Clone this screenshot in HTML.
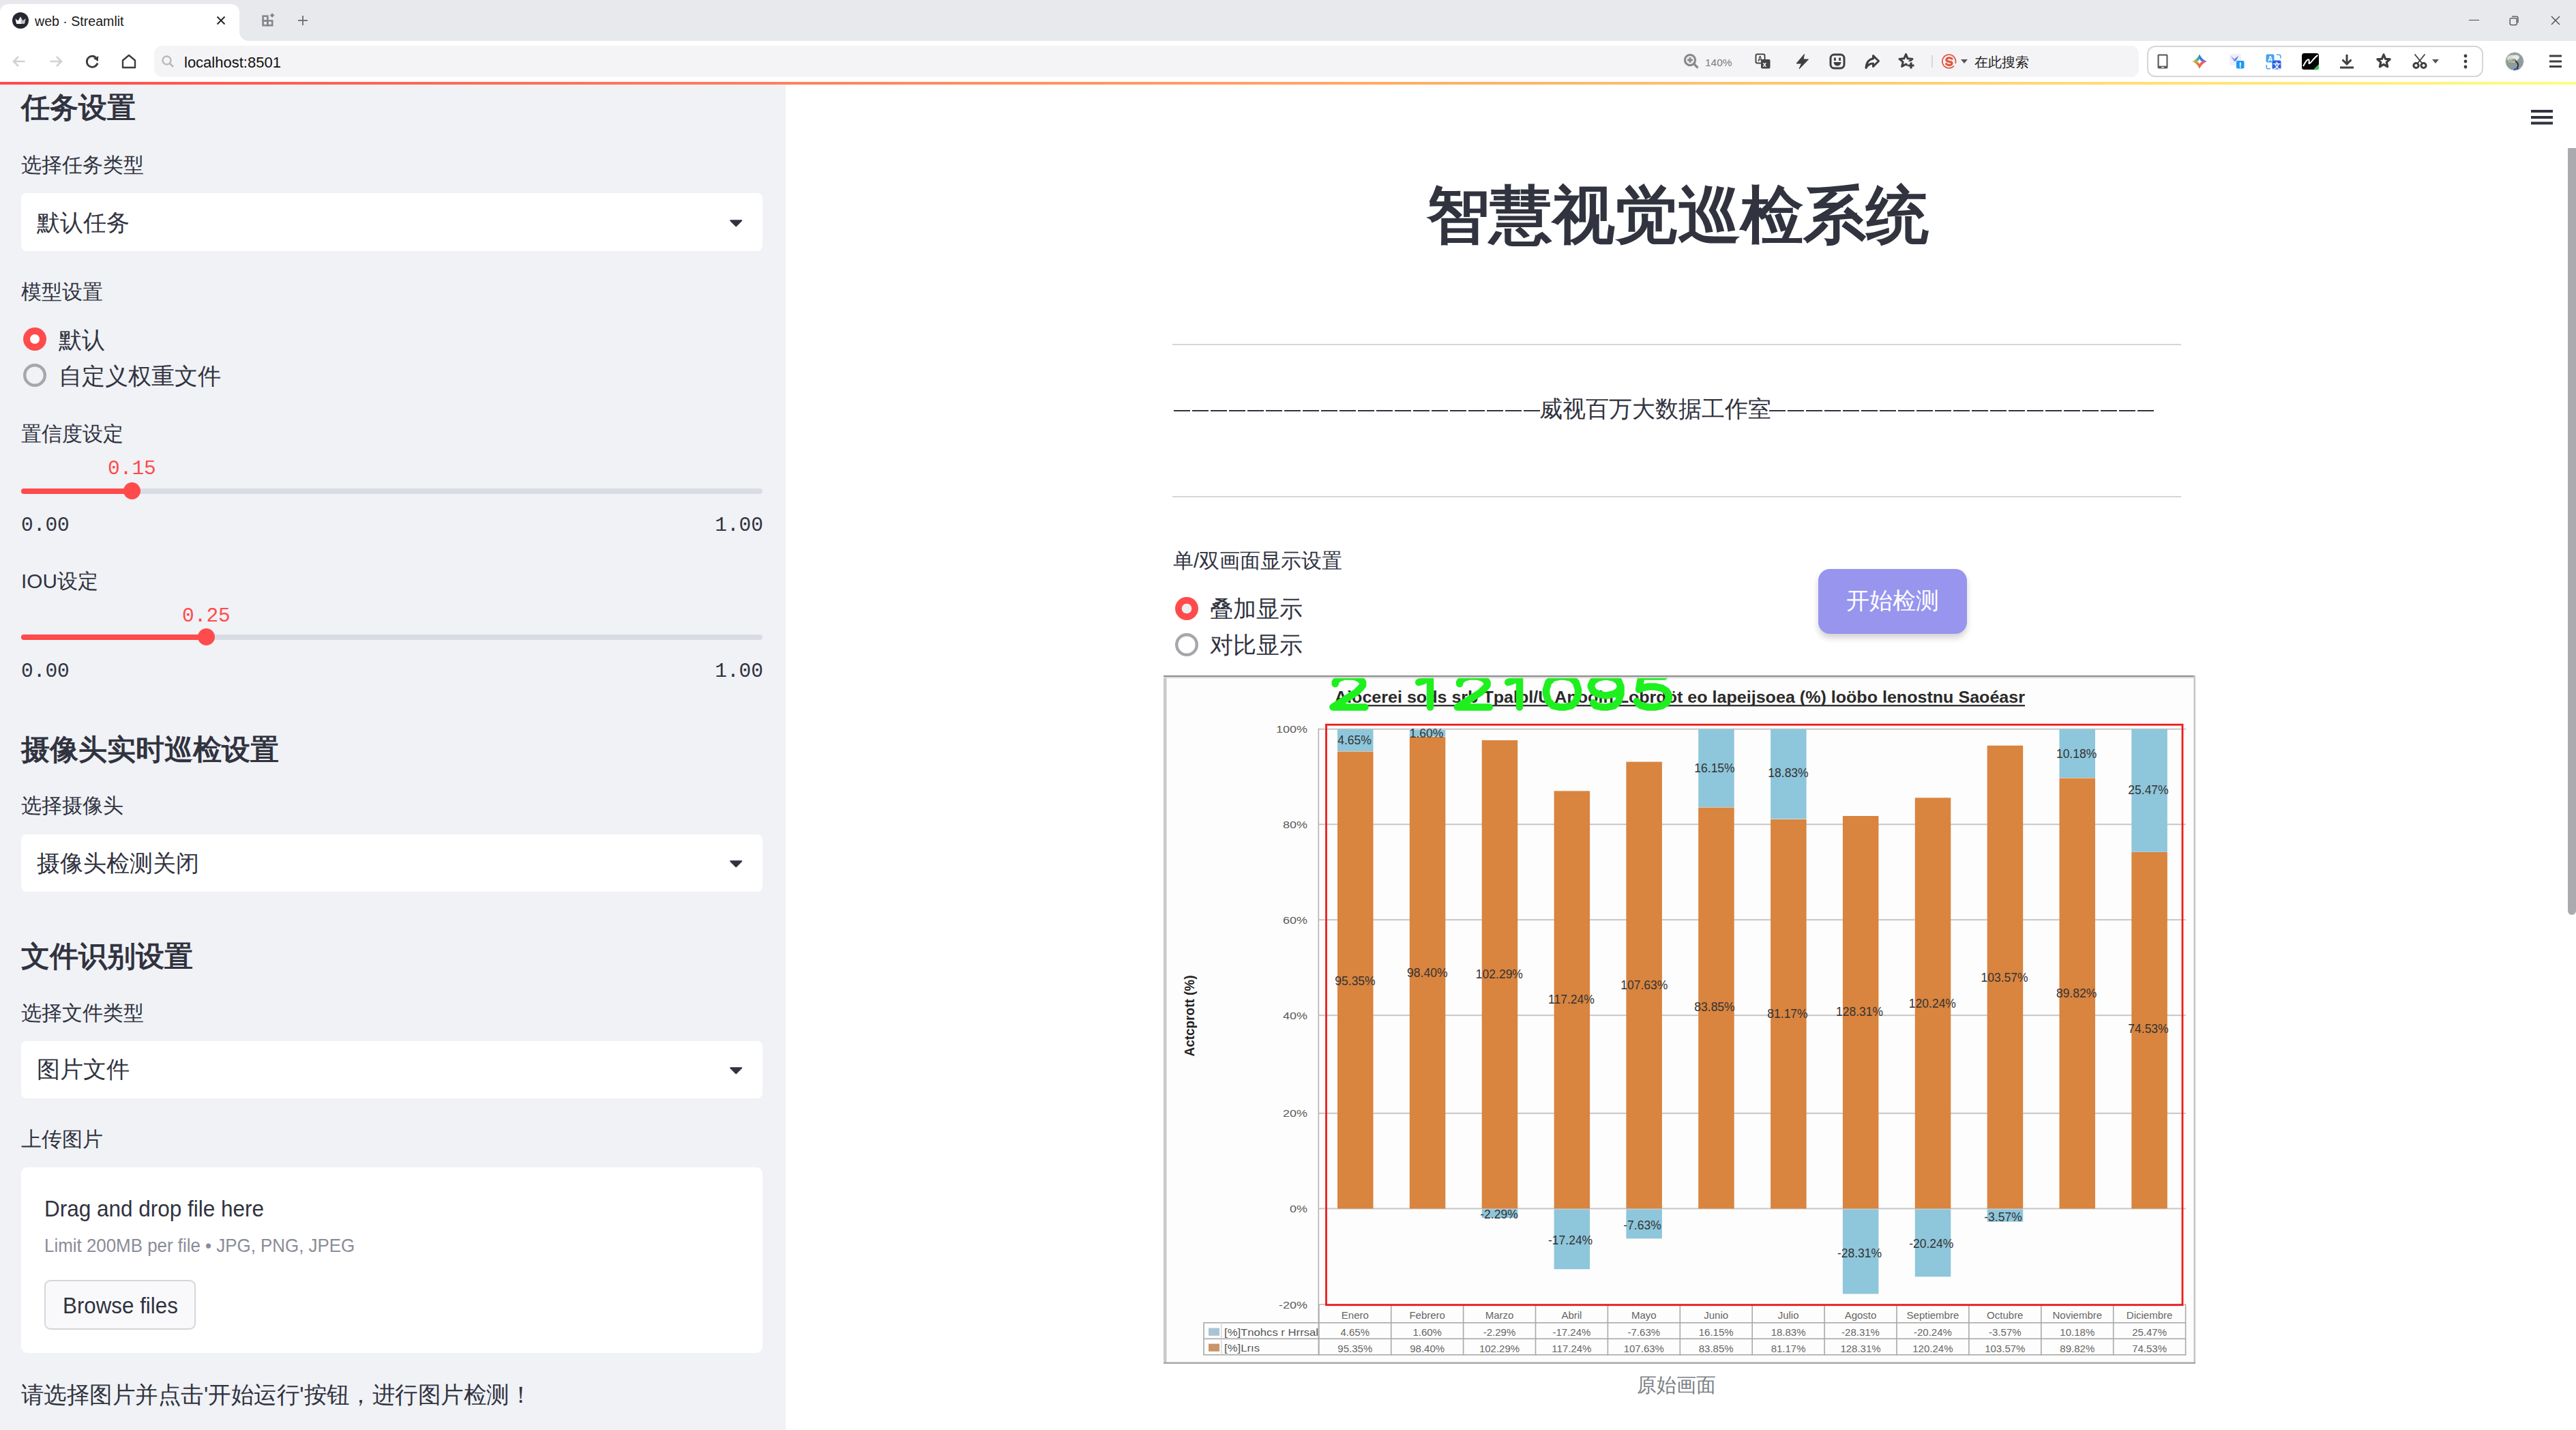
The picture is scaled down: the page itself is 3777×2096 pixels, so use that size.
<!DOCTYPE html>
<html><head><meta charset="utf-8">
<style>
*{box-sizing:border-box;margin:0;padding:0}
html,body{width:3777px;height:2096px;overflow:hidden;background:#fff}
body{position:relative;font-family:"Liberation Sans",sans-serif;color:#31333f}
.a{position:absolute;line-height:1;white-space:nowrap}
svg{position:absolute;overflow:visible}
</style></head><body>

<!-- ===== Browser chrome ===== -->
<div class="a" style="left:0;top:0;width:3777px;height:60px;background:#e8e9ed"></div>
<div class="a" style="left:0;top:26px;width:400px;height:34px;background:#fff"></div>
<div class="a" style="left:351px;top:0;width:3426px;height:60px;background:#e8e9ed;border-bottom-left-radius:14px"></div>
<div class="a" style="left:0;top:0;width:351px;height:6px;background:#e8e9ed"></div>
<div class="a" style="left:0;top:6px;width:351px;height:20px;background:#fff;border-radius:12px 12px 0 0"></div>
<div class="a" style="left:0;top:60px;width:3777px;height:60px;background:#fff"></div>
<!-- tab -->
<svg style="left:18px;top:18px" width="24" height="24" viewBox="0 0 24 24"><circle cx="12" cy="12" r="12" fill="#262730"/><path d="M4.5 9.5 L8.5 12.5 L12 6.5 L15.5 12.5 L19.5 9.5 L17.8 17 L6.2 17 Z" fill="#fff"/><path d="M12 6.5 L15.5 12.5 L19.5 9.5 L17.8 17 L13 17 Z" fill="#bdbdc4"/></svg>
<div class="a" style="left:51px;top:21px;font-size:20.5px;color:#1a1a1a;transform:scaleX(0.955);transform-origin:0 0">web · Streamlit</div>
<svg style="left:318px;top:24px" width="12" height="12" viewBox="0 0 12 12"><path d="M0.5 0.5L11.5 11.5M11.5 0.5L0.5 11.5" stroke="#222" stroke-width="1.8"/></svg>
<svg style="left:384px;top:19px" width="19" height="19" viewBox="0 0 19 19"><rect x="1.6" y="4.6" width="6.8" height="6.8" stroke="#86868c" stroke-width="2.6" fill="none"/><rect x="1.6" y="11.4" width="6.8" height="6.8" stroke="#86868c" stroke-width="2.6" fill="none"/><rect x="8.4" y="11.4" width="6.8" height="6.8" stroke="#86868c" stroke-width="2.6" fill="none"/><rect x="12.8" y="1.2" width="4.6" height="4.6" transform="rotate(45 15.1 3.5)" fill="#86868c"/></svg>
<svg style="left:436px;top:22px" width="16" height="16" viewBox="0 0 16 16"><path d="M8 1V15M1 8H15" stroke="#777" stroke-width="2"/></svg>
<!-- nav icons -->
<svg style="left:17px;top:80px" width="22" height="20" viewBox="0 0 22 20"><path d="M19.5 10H3.5M10 3L3 10L10 17" stroke="#d2d2d2" stroke-width="2.7" fill="none"/></svg>
<svg style="left:71px;top:80px" width="22" height="20" viewBox="0 0 22 20"><path d="M2.5 10H18.5M12 3L19 10L12 17" stroke="#d2d2d2" stroke-width="2.7" fill="none"/></svg>
<svg style="left:124px;top:79px" width="22" height="22" viewBox="0 0 22 22"><path d="M19 13.5A8 8 0 1 1 16.5 5.2" stroke="#3c3c3c" stroke-width="2.8" fill="none"/><path d="M13 6.8L20.2 3.2L19.8 11Z" fill="#3c3c3c"/></svg>
<svg style="left:178px;top:79px" width="22" height="22" viewBox="0 0 22 22"><path d="M2 20V9.5L11 2L20 9.5V20Z" stroke="#3c3c3c" stroke-width="2.4" fill="none" stroke-linejoin="round"/></svg>
<!-- omnibox -->
<div class="a" style="left:226px;top:67px;width:2910px;height:46px;background:#f4f4f6;border-radius:12px"></div>
<svg style="left:236px;top:80px" width="20" height="20" viewBox="0 0 20 20"><circle cx="8.5" cy="8.5" r="6" stroke="#b9b9b9" stroke-width="2.4" fill="none"/><path d="M13 13L18 18" stroke="#b9b9b9" stroke-width="2.6"/></svg>
<div class="a" style="left:270px;top:81px;font-size:22px;color:#111">localhost:8501</div>
<!-- right omnibox icons -->
<svg style="left:2468px;top:78px" width="24" height="24" viewBox="0 0 24 24"><circle cx="10" cy="10" r="7.6" stroke="#8a8a8a" stroke-width="3.2" fill="none"/><path d="M15.5 15.5L21.5 21.5" stroke="#8a8a8a" stroke-width="3.4"/><path d="M10 6V14M6 10H14" stroke="#8a8a8a" stroke-width="2.8"/></svg>
<div class="a" style="left:2500px;top:84px;font-size:15.5px;color:#7a7a7a">140%</div>
<svg style="left:2573px;top:78px" width="24" height="24" viewBox="0 0 24 24"><rect x="1.5" y="1.5" width="13" height="13" rx="2" stroke="#444" stroke-width="2" fill="#fff"/><text x="4" y="12" font-size="10" font-family="Liberation Sans" font-weight="bold" fill="#444">A</text><rect x="9" y="9" width="13.5" height="13.5" rx="2" fill="#444"/><text x="11.5" y="20" font-size="10" font-family="Liberation Sans" font-weight="bold" fill="#fff">x</text></svg>
<svg style="left:2632px;top:78px" width="22" height="24" viewBox="0 0 22 24"><path d="M13.5 1.5L2 15H9.5L6 23L19.5 9H12Z" fill="#3f3f3f" stroke="#3f3f3f" stroke-width="1" stroke-linejoin="round"/></svg>
<svg style="left:2682px;top:78px" width="24" height="24" viewBox="0 0 24 24"><rect x="2" y="2" width="20" height="20" rx="5.5" stroke="#3f3f3f" stroke-width="3" fill="none"/><rect x="7" y="6.5" width="2.8" height="4.5" fill="#3f3f3f"/><rect x="14.2" y="6.5" width="2.8" height="4.5" fill="#3f3f3f"/><path d="M6.5 13H17.5A5.5 5.5 0 0 1 6.5 13Z" fill="#3f3f3f"/></svg>
<svg style="left:2733px;top:78px" width="24" height="24" viewBox="0 0 24 24"><path d="M13.5 3.5L21.5 11.5L13.5 19.5V15C8.5 15 5.5 17 3 21.5C3.5 14 7 9 13.5 8Z" stroke="#3f3f3f" stroke-width="3" fill="none" stroke-linejoin="round"/></svg>
<svg style="left:2783px;top:77px" width="26" height="26" viewBox="0 0 26 26"><path d="M11.5 2.5L14.2 8.8L21 9.4L15.8 13.8L17.4 20.5L11.5 17L5.6 20.5L7.2 13.8L2 9.4L8.8 8.8Z" stroke="#3f3f3f" stroke-width="3" fill="none" stroke-linejoin="round"/><rect x="14" y="13" width="10" height="10" fill="#f4f4f6"/><path d="M19 14.5V23.5M14.5 19H23.5" stroke="#3f3f3f" stroke-width="3.2"/></svg>
<div class="a" style="left:2832px;top:81px;width:1.5px;height:18px;background:#d8d8d8"></div>
<svg style="left:2846px;top:78px" width="24" height="24" viewBox="0 0 24 24"><path d="M19 18.5A9.8 9.8 0 1 1 21 15" stroke="#e0573e" stroke-width="1.8" fill="none"/><path d="M16 8.2C14.8 7 13 6.6 11.4 6.8C9 7.1 7.6 8.4 7.8 10C8 11.6 9.6 12 12 12.3C14.4 12.6 16 13.2 16 14.8C16 16.6 14 17.6 11.6 17.4C9.8 17.2 8.6 16.6 7.6 15.6" stroke="#e0573e" stroke-width="3.2" fill="none" stroke-linecap="round"/></svg>
<svg style="left:2874px;top:86px" width="12" height="8" viewBox="0 0 12 8"><path d="M1 1H11L6 7Z" fill="#555"/></svg>
<div class="a" style="left:2895px;top:81px;font-size:20px;color:#222">在此搜索</div>
<!-- extension box -->
<div class="a" style="left:3148px;top:67px;width:493px;height:46px;border:2px solid #d6d6d8;border-radius:12px;background:#fff"></div>
<svg style="left:3163px;top:79px" width="16" height="22" viewBox="0 0 16 22"><rect x="0.5" y="0.5" width="15" height="21" rx="1.8" fill="#5a5a5a"/><rect x="2.6" y="2.6" width="10.8" height="15" fill="#fff"/><rect x="6" y="19" width="4" height="1.3" rx="0.6" fill="#fff"/></svg>
<svg style="left:3213px;top:78px" width="24" height="24" viewBox="0 0 24 24"><defs><linearGradient id="gs1" x1="0" y1="0" x2="1" y2="0"><stop offset="0" stop-color="#c8e04a"/><stop offset=".35" stop-color="#3fc27a"/><stop offset=".55" stop-color="#2a7be8"/><stop offset="1" stop-color="#b654e0"/></linearGradient><linearGradient id="gs2" x1="0" y1="0" x2="1" y2="0"><stop offset="0" stop-color="#f7b23a"/><stop offset=".5" stop-color="#f06a3a"/><stop offset="1" stop-color="#e8508a"/></linearGradient></defs><path d="M12 1.5Q15.2 8.8 22.5 12Q15.2 15.2 12 22.5Q8.8 15.2 1.5 12Q8.8 8.8 12 1.5Z" fill="url(#gs1)"/><path d="M1.5 12Q8.8 15.2 12 22.5Q15.2 15.2 22.5 12Z" fill="url(#gs2)"/><path d="M12 8Q12.9 11.1 16 12Q12.9 12.9 12 16Q11.1 12.9 8 12Q11.1 11.1 12 8Z" fill="#fff"/></svg>
<svg style="left:3268px;top:78px" width="26" height="26" viewBox="0 0 26 26"><rect x="1" y="1" width="17" height="17" rx="3" fill="#eef0fb"/><path d="M3 4.5L8 8.5L14.5 3.5L11 10.5L8.5 12.5Z" fill="#6f7fe8"/><path d="M3 4.5L9 9.5L8 12Z" fill="#93a1f0"/><rect x="11" y="11" width="11.5" height="11.5" rx="2" fill="#1a9af0"/><rect x="15.8" y="13.5" width="2" height="5.2" fill="#fff"/><rect x="15.8" y="19.6" width="2" height="1.8" fill="#fff"/></svg>
<svg style="left:3322px;top:79px" width="23" height="23" viewBox="0 0 23 23"><path d="M16 1.2H19.5Q21.8 1.2 21.8 3.5V6.5M1.2 16V19.5Q1.2 21.8 3.5 21.8H7" stroke="#4da3ef" stroke-width="1.6" fill="none"/><rect x="0.5" y="0.5" width="12" height="12" rx="2.2" fill="#47a2f0"/><text x="3" y="10.5" font-size="10" font-weight="bold" font-family="Liberation Sans" fill="#fff">A</text><rect x="9.5" y="9.5" width="13" height="13" rx="2.2" fill="#2a63e0"/><text x="10.5" y="20.5" font-size="11" font-weight="bold" fill="#fff">文</text></svg>
<svg style="left:3375px;top:78px" width="25" height="25" viewBox="0 0 25 25"><rect x="0" y="0" width="25" height="24" rx="3.5" fill="#050505"/><path d="M2 19C5 13 8 8.5 10 9.5C12 10.5 9 16 11.5 15C15 13 18 6 23.5 3" stroke="#fff" stroke-width="2" fill="none"/><path d="M16.5 24.5L25 16V21Q25 24.5 21.5 24.5Z" fill="#43c35c"/></svg>
<svg style="left:3429px;top:78px" width="24" height="24" viewBox="0 0 24 24"><path d="M12 2V15.5M5.5 9.5L12 16L18.5 9.5M2 21H22" stroke="#3f3f3f" stroke-width="3" fill="none"/></svg>
<svg style="left:3482px;top:77px" width="26" height="26" viewBox="0 0 26 26"><path d="M13 3L15.6 9.4L22.2 9.9L17.2 14.2L18.7 20.8L13 17.3L7.3 20.8L8.8 14.2L3.8 9.9L10.4 9.4Z" stroke="#3f3f3f" stroke-width="3.2" fill="none" stroke-linejoin="round"/></svg>
<svg style="left:3537px;top:78px" width="24" height="24" viewBox="0 0 24 24"><circle cx="5.5" cy="18" r="3.6" stroke="#3f3f3f" stroke-width="3" fill="none"/><circle cx="16.5" cy="18" r="3.6" stroke="#3f3f3f" stroke-width="3" fill="none"/><path d="M7.5 15L18.5 1.5M14.5 15L3.5 1.5" stroke="#3f3f3f" stroke-width="1.8"/></svg>
<svg style="left:3565px;top:86px" width="12" height="8" viewBox="0 0 12 8"><path d="M1 1H11L6 7Z" fill="#555"/></svg>
<svg style="left:3610px;top:78px" width="10" height="24" viewBox="0 0 10 24"><circle cx="5" cy="4" r="2.4" fill="#3f3f3f"/><circle cx="5" cy="12" r="2.4" fill="#3f3f3f"/><circle cx="5" cy="20" r="2.4" fill="#3f3f3f"/></svg>
<svg style="left:3673px;top:76px" width="28" height="28" viewBox="0 0 28 28"><defs><clipPath id="avc"><circle cx="14" cy="14" r="13.2"/></clipPath></defs><g clip-path="url(#avc)"><rect width="28" height="28" fill="#8e9c9f"/><ellipse cx="11" cy="10" rx="8" ry="5.5" fill="#dcdcd6"/><ellipse cx="16" cy="8" rx="5" ry="3.5" fill="#ece8e4"/><ellipse cx="8" cy="13" rx="4" ry="2.5" fill="#a9b79a"/><ellipse cx="13" cy="12" rx="3" ry="2" fill="#8fa27a"/><path d="M15 13Q20 17 19 21Q18 24 16 26" stroke="#2b2f35" stroke-width="2" fill="none"/><path d="M12 26Q16 22 22 25L22 28H12Z" fill="#2f57a8"/></g><circle cx="14" cy="14" r="13.4" fill="none" stroke="#d6d9d6" stroke-width="1"/></svg>
<svg style="left:3738px;top:80px" width="18" height="20" viewBox="0 0 18 20"><path d="M0 2H18M0 10H18M0 17.6H18" stroke="#3f3f3f" stroke-width="3"/></svg>
<!-- window controls -->
<div class="a" style="left:3619.5px;top:28.5px;width:15px;height:1.5px;background:#4a4a4a"></div>
<svg style="left:3678px;top:22px" width="16" height="16" viewBox="0 0 16 16"><rect x="2.2" y="4.6" width="10" height="10" rx="2" stroke="#4a4a4a" stroke-width="1.3" fill="none"/><path d="M5 2.2H11.5Q14 2.2 14 4.7V11.5" stroke="#4a4a4a" stroke-width="1.3" fill="none"/></svg>
<svg style="left:3740px;top:23px" width="14" height="14" viewBox="0 0 14 14"><path d="M1 1L13 13M13 1L1 13" stroke="#4a4a4a" stroke-width="1.4"/></svg>
<!-- decoration gradient -->
<div class="a" style="left:0;top:120px;width:3777px;height:4px;background:linear-gradient(90deg,#ff4b4b,#fffd80)"></div>

<!-- ===== Sidebar ===== -->
<div class="a" style="left:0;top:124px;width:1152px;height:1972px;background:#f0f2f6"></div>

<div class="a" style="left:31px;top:137px;font-size:42px;font-weight:bold">任务设置</div>
<div class="a" style="left:31px;top:227px;font-size:29.8px">选择任务类型</div>
<div class="a" style="left:31px;top:283px;width:1087px;height:85px;background:#fff;border-radius:8px"></div>
<div class="a" style="left:54px;top:310px;font-size:33.6px">默认任务</div>
<svg style="left:1070px;top:322px" width="19" height="11" viewBox="0 0 19 11"><path d="M1.2 1.2H17.2L9.2 9.4Z" fill="#31333f" stroke="#31333f" stroke-width="2" stroke-linejoin="round"/></svg>
<div class="a" style="left:31px;top:413px;font-size:29.8px">模型设置</div>
<svg style="left:34px;top:480px" width="34" height="34" viewBox="0 0 34 34"><circle cx="17" cy="17" r="17" fill="#ff4b4b"/><circle cx="17" cy="17" r="7" fill="#fff"/></svg>
<div class="a" style="left:86px;top:482px;font-size:33.6px">默认</div>
<svg style="left:34px;top:533px" width="34" height="34" viewBox="0 0 34 34"><circle cx="17" cy="17" r="14.8" fill="#f0f2f6" stroke="#a6a6ab" stroke-width="4.4"/></svg>
<div class="a" style="left:86px;top:535px;font-size:33.6px">自定义权重文件</div>

<div class="a" style="left:31px;top:621px;font-size:29.8px">置信度设定</div>
<div class="a" style="left:158px;top:673px;font-size:29.5px;font-family:'Liberation Mono',monospace;color:#ff4b4b">0.15</div>
<div class="a" style="left:31px;top:716px;width:1087px;height:8px;border-radius:4px;background:#d9dce4"></div>
<div class="a" style="left:31px;top:716px;width:163px;height:8px;border-radius:4px;background:#ff4b4b"></div>
<div class="a" style="left:181px;top:707px;width:25px;height:25px;border-radius:50%;background:#ff4b4b"></div>
<div class="a" style="left:31px;top:756px;font-size:29.5px;font-family:'Liberation Mono',monospace">0.00</div>
<div class="a" style="left:1018px;top:756px;width:101px;text-align:right;font-size:29.5px;font-family:'Liberation Mono',monospace">1.00</div>

<div class="a" style="left:31px;top:837px;font-size:29.8px">IOU设定</div>
<div class="a" style="left:267px;top:889px;font-size:29.5px;font-family:'Liberation Mono',monospace;color:#ff4b4b">0.25</div>
<div class="a" style="left:31px;top:930px;width:1087px;height:8px;border-radius:4px;background:#d9dce4"></div>
<div class="a" style="left:31px;top:930px;width:272px;height:8px;border-radius:4px;background:#ff4b4b"></div>
<div class="a" style="left:290px;top:921px;width:25px;height:25px;border-radius:50%;background:#ff4b4b"></div>
<div class="a" style="left:31px;top:970px;font-size:29.5px;font-family:'Liberation Mono',monospace">0.00</div>
<div class="a" style="left:1018px;top:970px;width:101px;text-align:right;font-size:29.5px;font-family:'Liberation Mono',monospace">1.00</div>

<div class="a" style="left:31px;top:1078px;font-size:42px;font-weight:bold">摄像头实时巡检设置</div>
<div class="a" style="left:31px;top:1166px;font-size:29.8px">选择摄像头</div>
<div class="a" style="left:31px;top:1223px;width:1087px;height:84px;background:#fff;border-radius:8px"></div>
<div class="a" style="left:54px;top:1249px;font-size:33.6px">摄像头检测关闭</div>
<svg style="left:1070px;top:1261px" width="19" height="11" viewBox="0 0 19 11"><path d="M1.2 1.2H17.2L9.2 9.4Z" fill="#31333f" stroke="#31333f" stroke-width="2" stroke-linejoin="round"/></svg>

<div class="a" style="left:31px;top:1381px;font-size:42px;font-weight:bold">文件识别设置</div>
<div class="a" style="left:31px;top:1470px;font-size:29.8px">选择文件类型</div>
<div class="a" style="left:31px;top:1526px;width:1087px;height:84px;background:#fff;border-radius:8px"></div>
<div class="a" style="left:54px;top:1551px;font-size:33.6px">图片文件</div>
<svg style="left:1070px;top:1564px" width="19" height="11" viewBox="0 0 19 11"><path d="M1.2 1.2H17.2L9.2 9.4Z" fill="#31333f" stroke="#31333f" stroke-width="2" stroke-linejoin="round"/></svg>

<div class="a" style="left:31px;top:1655px;font-size:29.8px">上传图片</div>
<div class="a" style="left:31px;top:1711px;width:1087px;height:272px;background:#fff;border-radius:9px"></div>
<div class="a" style="left:65px;top:1755px;font-size:33.5px;transform:scaleX(0.94);transform-origin:0 0">Drag and drop file here</div>
<div class="a" style="left:65px;top:1812px;font-size:28px;color:#8a8c97;transform:scaleX(0.925);transform-origin:0 0">Limit 200MB per file • JPG, PNG, JPEG</div>
<div class="a" style="left:65px;top:1876px;width:222px;height:73px;border:2px solid #d5d6da;border-radius:9px;background:#f9f9fb"></div>
<div class="a" style="left:92px;top:1897px;font-size:33.5px;transform:scaleX(0.935);transform-origin:0 0">Browse files</div>
<div class="a" style="left:31px;top:2028px;font-size:33.6px;transform:scaleX(0.985);transform-origin:0 0">请选择图片并点击'开始运行'按钮，进行图片检测！</div>


<!-- ===== Main ===== -->
<svg style="left:3711px;top:161px" width="32" height="22" viewBox="0 0 32 22"><path d="M0 2H32M0 11H32M0 19.5H32" stroke="#31333f" stroke-width="4"/></svg>
<div class="a" style="left:3765px;top:217px;width:12px;height:1124px;background:#ababaf;border-radius:0 0 6px 6px"></div>
<div class="a" style="left:2092px;top:270px;font-size:91.5px;font-weight:bold">智慧视觉巡检系统</div>
<div class="a" style="left:1719px;top:504px;width:1479px;height:2px;background:#d6d6d9"></div>
<div class="a" style="left:1719px;top:727px;width:1479px;height:2px;background:#d6d6d9"></div>
<div class="a" style="left:1721px;top:601px;width:537px;height:2px;background:repeating-linear-gradient(90deg,#31333f 0 24px,transparent 24px 27px)"></div>
<div class="a" style="left:2594px;top:601px;width:564px;height:2px;background:repeating-linear-gradient(90deg,#31333f 0 24px,transparent 24px 27px)"></div>
<div class="a" style="left:2257px;top:583px;font-size:33.5px">威视百万大数据工作室</div>
<div class="a" style="left:1720px;top:807px;font-size:29.8px">单/双画面显示设置</div>
<svg style="left:1723px;top:875px" width="34" height="34" viewBox="0 0 34 34"><circle cx="17" cy="17" r="17" fill="#ff4b4b"/><circle cx="17" cy="17" r="7.3" fill="#eceef2"/></svg>
<div class="a" style="left:1774px;top:876px;font-size:33.6px">叠加显示</div>
<svg style="left:1723px;top:928px" width="34" height="34" viewBox="0 0 34 34"><circle cx="17" cy="17" r="14.8" fill="#fff" stroke="#a6a6ab" stroke-width="4.4"/></svg>
<div class="a" style="left:1774px;top:929px;font-size:33.6px">对比显示</div>
<div class="a" style="left:2666px;top:834px;width:218px;height:95px;border-radius:17px;background:#9795ee;box-shadow:0 6px 10px rgba(0,0,0,0.18)"></div>
<div class="a" style="left:2707px;top:864px;font-size:33.6px;color:#fff">开始检测</div>
<div class="a" style="left:2400px;top:2015px;font-size:29.4px;color:#7d7f87">原始画面</div>
<!--CHART-->
<svg style="left:1706px;top:990px" width="1513" height="1009" viewBox="1706 990 1513 1009">
<rect x="1706" y="990" width="1513" height="1009" fill="#fdfdfd"/>
<rect x="1933" y="1067.7" width="1272" height="2" fill="#c6c6c6"/>
<rect x="1933" y="1207.3" width="1272" height="2" fill="#c6c6c6"/>
<rect x="1933" y="1347.2" width="1272" height="2" fill="#c6c6c6"/>
<rect x="1933" y="1487.2" width="1272" height="2" fill="#c6c6c6"/>
<rect x="1933" y="1630.8" width="1272" height="2" fill="#c6c6c6"/>
<rect x="1933" y="1770.5" width="1272" height="2" fill="#c6c6c6"/>
<rect x="1933" y="1911.0" width="1272" height="2" fill="#c6c6c6"/>
<rect x="1932.5" y="1067.7" width="1.6" height="919" fill="#b4b4b4"/>
<rect x="1961.0" y="1101.5" width="52.5" height="670.0" fill="#d9843f"/>
<rect x="1961.0" y="1068.7" width="52.5" height="32.3" fill="#8ec6db"/>
<rect x="2066.8" y="1080.0" width="52.5" height="691.5" fill="#d9843f"/>
<rect x="2066.8" y="1070.0" width="52.5" height="9.5" fill="#8ec6db"/>
<rect x="2172.7" y="1085.0" width="52.5" height="686.5" fill="#d9843f"/>
<rect x="2172.7" y="1772.5" width="52.5" height="12.5" fill="#8ec6db"/>
<rect x="2278.6" y="1159.4" width="52.5" height="612.1" fill="#d9843f"/>
<rect x="2278.6" y="1772.5" width="52.5" height="87.8" fill="#8ec6db"/>
<rect x="2384.4" y="1116.6" width="52.5" height="654.9" fill="#d9843f"/>
<rect x="2384.4" y="1772.5" width="52.5" height="42.9" fill="#8ec6db"/>
<rect x="2490.2" y="1183.5" width="52.5" height="588.0" fill="#d9843f"/>
<rect x="2490.2" y="1068.7" width="52.5" height="114.3" fill="#8ec6db"/>
<rect x="2596.1" y="1201.0" width="52.5" height="570.5" fill="#d9843f"/>
<rect x="2596.1" y="1068.7" width="52.5" height="131.8" fill="#8ec6db"/>
<rect x="2701.9" y="1196.0" width="52.5" height="575.5" fill="#d9843f"/>
<rect x="2701.9" y="1772.5" width="52.5" height="124.0" fill="#8ec6db"/>
<rect x="2807.8" y="1169.3" width="52.5" height="602.2" fill="#d9843f"/>
<rect x="2807.8" y="1772.5" width="52.5" height="98.8" fill="#8ec6db"/>
<rect x="2913.7" y="1092.8" width="52.5" height="678.7" fill="#d9843f"/>
<rect x="2913.7" y="1772.5" width="52.5" height="18.2" fill="#8ec6db"/>
<rect x="3019.5" y="1140.5" width="52.5" height="631.0" fill="#d9843f"/>
<rect x="3019.5" y="1068.7" width="52.5" height="71.3" fill="#8ec6db"/>
<rect x="3125.3" y="1249.0" width="52.5" height="522.5" fill="#d9843f"/>
<rect x="3125.3" y="1068.7" width="52.5" height="180.1" fill="#8ec6db"/>
<text x="1986.0" y="1091.3" font-size="17.5" text-anchor="middle" fill="#333" font-family="Liberation Sans" >4.65%</text>
<text x="2091.5" y="1081.3" font-size="17.5" text-anchor="middle" fill="#333" font-family="Liberation Sans" >1.60%</text>
<text x="2514.0" y="1132.3" font-size="17.5" text-anchor="middle" fill="#333" font-family="Liberation Sans" >16.15%</text>
<text x="2622.0" y="1139.3" font-size="17.5" text-anchor="middle" fill="#333" font-family="Liberation Sans" >18.83%</text>
<text x="3044.6" y="1111.0" font-size="17.5" text-anchor="middle" fill="#333" font-family="Liberation Sans" >10.18%</text>
<text x="3150.0" y="1164.3" font-size="17.5" text-anchor="middle" fill="#333" font-family="Liberation Sans" >25.47%</text>
<text x="2198.0" y="1786.3" font-size="17.5" text-anchor="middle" fill="#333" font-family="Liberation Sans" >-2.29%</text>
<text x="2302.6" y="1823.8" font-size="17.5" text-anchor="middle" fill="#333" font-family="Liberation Sans" >-17.24%</text>
<text x="2408.0" y="1801.9" font-size="17.5" text-anchor="middle" fill="#333" font-family="Liberation Sans" >-7.63%</text>
<text x="2726.5" y="1843.0" font-size="17.5" text-anchor="middle" fill="#333" font-family="Liberation Sans" >-28.31%</text>
<text x="2831.8" y="1828.7" font-size="17.5" text-anchor="middle" fill="#333" font-family="Liberation Sans" >-20.24%</text>
<text x="2937.0" y="1790.3" font-size="17.5" text-anchor="middle" fill="#333" font-family="Liberation Sans" >-3.57%</text>
<text x="1987.0" y="1443.6" font-size="17.5" text-anchor="middle" fill="#333" font-family="Liberation Sans" >95.35%</text>
<text x="2092.8" y="1432.3" font-size="17.5" text-anchor="middle" fill="#333" font-family="Liberation Sans" >98.40%</text>
<text x="2198.4" y="1433.6" font-size="17.5" text-anchor="middle" fill="#333" font-family="Liberation Sans" >102.29%</text>
<text x="2304.0" y="1471.3" font-size="17.5" text-anchor="middle" fill="#333" font-family="Liberation Sans" >117.24%</text>
<text x="2410.8" y="1449.8" font-size="17.5" text-anchor="middle" fill="#333" font-family="Liberation Sans" >107.63%</text>
<text x="2514.0" y="1482.1" font-size="17.5" text-anchor="middle" fill="#333" font-family="Liberation Sans" >83.85%</text>
<text x="2621.0" y="1492.0" font-size="17.5" text-anchor="middle" fill="#333" font-family="Liberation Sans" >81.17%</text>
<text x="2726.6" y="1489.3" font-size="17.5" text-anchor="middle" fill="#333" font-family="Liberation Sans" >128.31%</text>
<text x="2833.4" y="1477.1" font-size="17.5" text-anchor="middle" fill="#333" font-family="Liberation Sans" >120.24%</text>
<text x="2939.0" y="1438.6" font-size="17.5" text-anchor="middle" fill="#333" font-family="Liberation Sans" >103.57%</text>
<text x="3044.6" y="1462.3" font-size="17.5" text-anchor="middle" fill="#333" font-family="Liberation Sans" >89.82%</text>
<text x="3150.0" y="1514.3" font-size="17.5" text-anchor="middle" fill="#333" font-family="Liberation Sans" >74.53%</text>
<text x="1871" y="1074.2" font-size="15.5" fill="#5a5a5a" font-family="Liberation Sans" textLength="46" lengthAdjust="spacingAndGlyphs">100%</text>
<text x="1881" y="1213.8" font-size="15.5" fill="#5a5a5a" font-family="Liberation Sans" textLength="36" lengthAdjust="spacingAndGlyphs">80%</text>
<text x="1881" y="1353.7" font-size="15.5" fill="#5a5a5a" font-family="Liberation Sans" textLength="36" lengthAdjust="spacingAndGlyphs">60%</text>
<text x="1881" y="1493.7" font-size="15.5" fill="#5a5a5a" font-family="Liberation Sans" textLength="36" lengthAdjust="spacingAndGlyphs">40%</text>
<text x="1881" y="1637.3" font-size="15.5" fill="#5a5a5a" font-family="Liberation Sans" textLength="36" lengthAdjust="spacingAndGlyphs">20%</text>
<text x="1891" y="1777.0" font-size="15.5" fill="#5a5a5a" font-family="Liberation Sans" textLength="26" lengthAdjust="spacingAndGlyphs">0%</text>
<text x="1875" y="1917.5" font-size="15.5" fill="#5a5a5a" font-family="Liberation Sans" textLength="42" lengthAdjust="spacingAndGlyphs">-20%</text>
<text x="0" y="0" transform="translate(1751,1489) rotate(-90)" font-size="20" font-weight="bold" text-anchor="middle" fill="#222" font-family="Liberation Sans" textLength="119" lengthAdjust="spacingAndGlyphs">Actcprott (%)</text>
<rect x="1933.0" y="1912" width="1.6" height="74.5" fill="#a9a9a9"/>
<rect x="2038.9" y="1912" width="1.6" height="74.5" fill="#a9a9a9"/>
<rect x="2144.8" y="1912" width="1.6" height="74.5" fill="#a9a9a9"/>
<rect x="2250.7" y="1912" width="1.6" height="74.5" fill="#a9a9a9"/>
<rect x="2356.6" y="1912" width="1.6" height="74.5" fill="#a9a9a9"/>
<rect x="2462.5" y="1912" width="1.6" height="74.5" fill="#a9a9a9"/>
<rect x="2568.4" y="1912" width="1.6" height="74.5" fill="#a9a9a9"/>
<rect x="2674.3" y="1912" width="1.6" height="74.5" fill="#a9a9a9"/>
<rect x="2780.2" y="1912" width="1.6" height="74.5" fill="#a9a9a9"/>
<rect x="2886.1" y="1912" width="1.6" height="74.5" fill="#a9a9a9"/>
<rect x="2992.0" y="1912" width="1.6" height="74.5" fill="#a9a9a9"/>
<rect x="3097.9" y="1912" width="1.6" height="74.5" fill="#a9a9a9"/>
<rect x="3203.8" y="1912" width="1.6" height="74.5" fill="#a9a9a9"/>
<rect x="1765" y="1938.0" width="1440" height="1.6" fill="#a9a9a9"/>
<rect x="1765" y="1961.5" width="1440" height="1.6" fill="#a9a9a9"/>
<rect x="1765" y="1985.0" width="1440" height="1.6" fill="#a9a9a9"/>
<rect x="1764.2" y="1938" width="1.6" height="48.5" fill="#a9a9a9"/>
<rect x="1790.2" y="1938" width="1.2" height="48.5" fill="#cfcfcf"/>
<rect x="1772" y="1946.6" width="16" height="11.2" fill="#a9c4d4"/>
<rect x="1772" y="1969.6" width="16" height="11.2" fill="#c8956a"/>
<text x="1795" y="1957.5" font-size="15" fill="#555" font-family="Liberation Sans" textLength="138" lengthAdjust="spacingAndGlyphs">[%]Tnohcs r Hrrsal</text>
<text x="1795" y="1981" font-size="15" fill="#555" font-family="Liberation Sans" textLength="52" lengthAdjust="spacingAndGlyphs">[%]Lrıs</text>
<text x="1986.8" y="1933" font-size="15" text-anchor="middle" fill="#666" font-family="Liberation Sans">Enero</text>
<text x="1986.8" y="1958" font-size="15" text-anchor="middle" fill="#666" font-family="Liberation Sans">4.65%</text>
<text x="1986.8" y="1982" font-size="15" text-anchor="middle" fill="#666" font-family="Liberation Sans">95.35%</text>
<text x="2092.7" y="1933" font-size="15" text-anchor="middle" fill="#666" font-family="Liberation Sans">Febrero</text>
<text x="2092.7" y="1958" font-size="15" text-anchor="middle" fill="#666" font-family="Liberation Sans">1.60%</text>
<text x="2092.7" y="1982" font-size="15" text-anchor="middle" fill="#666" font-family="Liberation Sans">98.40%</text>
<text x="2198.5" y="1933" font-size="15" text-anchor="middle" fill="#666" font-family="Liberation Sans">Marzo</text>
<text x="2198.5" y="1958" font-size="15" text-anchor="middle" fill="#666" font-family="Liberation Sans">-2.29%</text>
<text x="2198.5" y="1982" font-size="15" text-anchor="middle" fill="#666" font-family="Liberation Sans">102.29%</text>
<text x="2304.4" y="1933" font-size="15" text-anchor="middle" fill="#666" font-family="Liberation Sans">Abril</text>
<text x="2304.4" y="1958" font-size="15" text-anchor="middle" fill="#666" font-family="Liberation Sans">-17.24%</text>
<text x="2304.4" y="1982" font-size="15" text-anchor="middle" fill="#666" font-family="Liberation Sans">117.24%</text>
<text x="2410.3" y="1933" font-size="15" text-anchor="middle" fill="#666" font-family="Liberation Sans">Mayo</text>
<text x="2410.3" y="1958" font-size="15" text-anchor="middle" fill="#666" font-family="Liberation Sans">-7.63%</text>
<text x="2410.3" y="1982" font-size="15" text-anchor="middle" fill="#666" font-family="Liberation Sans">107.63%</text>
<text x="2516.2" y="1933" font-size="15" text-anchor="middle" fill="#666" font-family="Liberation Sans">Junio</text>
<text x="2516.2" y="1958" font-size="15" text-anchor="middle" fill="#666" font-family="Liberation Sans">16.15%</text>
<text x="2516.2" y="1982" font-size="15" text-anchor="middle" fill="#666" font-family="Liberation Sans">83.85%</text>
<text x="2622.1" y="1933" font-size="15" text-anchor="middle" fill="#666" font-family="Liberation Sans">Julio</text>
<text x="2622.1" y="1958" font-size="15" text-anchor="middle" fill="#666" font-family="Liberation Sans">18.83%</text>
<text x="2622.1" y="1982" font-size="15" text-anchor="middle" fill="#666" font-family="Liberation Sans">81.17%</text>
<text x="2728.0" y="1933" font-size="15" text-anchor="middle" fill="#666" font-family="Liberation Sans">Agosto</text>
<text x="2728.0" y="1958" font-size="15" text-anchor="middle" fill="#666" font-family="Liberation Sans">-28.31%</text>
<text x="2728.0" y="1982" font-size="15" text-anchor="middle" fill="#666" font-family="Liberation Sans">128.31%</text>
<text x="2833.9" y="1933" font-size="15" text-anchor="middle" fill="#666" font-family="Liberation Sans">Septiembre</text>
<text x="2833.9" y="1958" font-size="15" text-anchor="middle" fill="#666" font-family="Liberation Sans">-20.24%</text>
<text x="2833.9" y="1982" font-size="15" text-anchor="middle" fill="#666" font-family="Liberation Sans">120.24%</text>
<text x="2939.8" y="1933" font-size="15" text-anchor="middle" fill="#666" font-family="Liberation Sans">Octubre</text>
<text x="2939.8" y="1958" font-size="15" text-anchor="middle" fill="#666" font-family="Liberation Sans">-3.57%</text>
<text x="2939.8" y="1982" font-size="15" text-anchor="middle" fill="#666" font-family="Liberation Sans">103.57%</text>
<text x="3045.8" y="1933" font-size="15" text-anchor="middle" fill="#666" font-family="Liberation Sans">Noviembre</text>
<text x="3045.8" y="1958" font-size="15" text-anchor="middle" fill="#666" font-family="Liberation Sans">10.18%</text>
<text x="3045.8" y="1982" font-size="15" text-anchor="middle" fill="#666" font-family="Liberation Sans">89.82%</text>
<text x="3151.6" y="1933" font-size="15" text-anchor="middle" fill="#666" font-family="Liberation Sans">Diciembre</text>
<text x="3151.6" y="1958" font-size="15" text-anchor="middle" fill="#666" font-family="Liberation Sans">25.47%</text>
<text x="3151.6" y="1982" font-size="15" text-anchor="middle" fill="#666" font-family="Liberation Sans">74.53%</text>
<rect x="1944.5" y="1062.2" width="1255.5" height="850.5" fill="none" stroke="#ee1c1c" stroke-width="2.8"/>
<text x="1957" y="1030" font-size="23" font-weight="bold" fill="#2a2a2a" font-family="Liberation Sans" textLength="1012" lengthAdjust="spacingAndGlyphs">Aiocerei sods srb Tpalpl/U Anooin Lobrdöt eo lapeijsoea (%) loöbo lenostnu Saoéasr</text>
<rect x="1957" y="1033" width="1012" height="2.4" fill="#333"/>
<clipPath id="cf"><rect x="1706" y="990" width="1513" height="1009"/></clipPath><g clip-path="url(#cf)">
<path d="M1957.7,1002.3 L1957.7,1000.1 L1961.1,995.8 L1964.5,993.7 L1971.2,991.6 L1984.6,991.6 L1991.3,993.7 L1994.7,995.8 L1998.1,1000.1 L1998.1,1004.4 L1994.7,1008.7 L1988.0,1015.1 L1954.4,1036.5 L2001.4,1036.5" fill="none" stroke="#1ef01e" stroke-width="10.5" stroke-linecap="round" stroke-linejoin="round"/>
<path d="M2080.2,1000.1 L2086.9,998.0 L2097.0,991.6 L2097.0,1036.5" fill="none" stroke="#1ef01e" stroke-width="10.5" stroke-linecap="round" stroke-linejoin="round"/>
<path d="M2140.1,1002.3 L2140.1,1000.1 L2143.5,995.8 L2146.9,993.7 L2153.6,991.6 L2167.0,991.6 L2173.7,993.7 L2177.1,995.8 L2180.5,1000.1 L2180.5,1004.4 L2177.1,1008.7 L2170.4,1015.1 L2136.8,1036.5 L2183.8,1036.5" fill="none" stroke="#1ef01e" stroke-width="10.5" stroke-linecap="round" stroke-linejoin="round"/>
<path d="M2211.2,1000.1 L2217.9,998.0 L2228.0,991.6 L2228.0,1036.5" fill="none" stroke="#1ef01e" stroke-width="10.5" stroke-linecap="round" stroke-linejoin="round"/>
<path d="M2287.1,991.6 L2277.1,993.7 L2270.3,1000.1 L2267.0,1010.8 L2267.0,1017.2 L2270.3,1027.9 L2277.1,1034.4 L2287.1,1036.5 L2293.9,1036.5 L2303.9,1034.4 L2310.7,1027.9 L2314.0,1017.2 L2314.0,1010.8 L2310.7,1000.1 L2303.9,993.7 L2293.9,991.6 Z" fill="none" stroke="#1ef01e" stroke-width="10.5" stroke-linecap="round" stroke-linejoin="round"/>
<path d="M2376.5,1006.5 L2373.1,1013.0 L2366.4,1017.2 L2356.3,1019.4 L2352.9,1019.4 L2342.9,1017.2 L2336.1,1013.0 L2332.8,1006.5 L2332.8,1004.4 L2336.1,998.0 L2342.9,993.7 L2352.9,991.6 L2356.3,991.6 L2366.4,993.7 L2373.1,998.0 L2376.5,1006.5 L2376.5,1017.2 L2373.1,1027.9 L2366.4,1034.4 L2356.3,1036.5 L2349.6,1036.5 L2339.5,1034.4 L2336.1,1030.1" fill="none" stroke="#1ef01e" stroke-width="10.5" stroke-linecap="round" stroke-linejoin="round"/>
<path d="M2440.1,991.6 L2406.5,991.6 L2403.1,1010.8 L2406.5,1008.7 L2416.6,1006.5 L2426.7,1006.5 L2436.7,1008.7 L2443.5,1013.0 L2446.8,1019.4 L2446.8,1023.7 L2443.5,1030.1 L2436.7,1034.4 L2426.7,1036.5 L2416.6,1036.5 L2406.5,1034.4 L2403.1,1032.2 L2399.8,1027.9" fill="none" stroke="#1ef01e" stroke-width="10.5" stroke-linecap="round" stroke-linejoin="round"/>
</g>
<rect x="1706" y="990" width="4.5" height="1009" fill="#cacaca"/>
<rect x="1706" y="990" width="1513" height="2.2" fill="#8e8e8e"/>
<rect x="1706" y="992.2" width="1513" height="2" fill="#dadada"/>
<rect x="3216.5" y="990" width="2.5" height="1009" fill="#c4c4c4"/>
<rect x="1706" y="1996.5" width="1513" height="2.5" fill="#a8a8a8"/>
</svg>
<!--/CHART-->

</body></html>
